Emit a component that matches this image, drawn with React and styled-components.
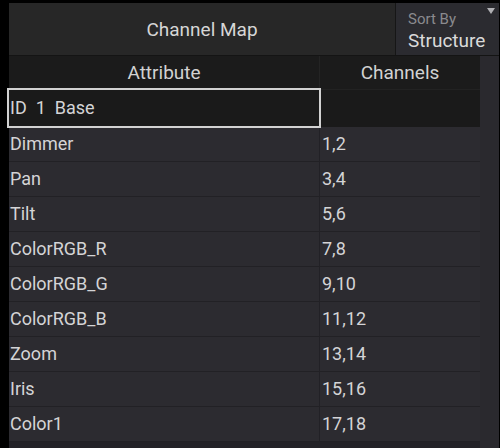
import styled, { createGlobalStyle } from "styled-components";

const rows = [
  { name: "Dimmer", ch: "1,2" },
  { name: "Pan", ch: "3,4" },
  { name: "Tilt", ch: "5,6" },
  { name: "ColorRGB_R", ch: "7,8" },
  { name: "ColorRGB_G", ch: "9,10" },
  { name: "ColorRGB_B", ch: "11,12" },
  { name: "Zoom", ch: "13,14" },
  { name: "Iris", ch: "15,16" },
  { name: "Color1", ch: "17,18" },
];

const Global = createGlobalStyle`
  html, body {
    margin: 0;
    background: #000;
    font-family: Roboto, "Liberation Sans", sans-serif;
  }
`;

const Screen = styled.div`
  width: 500px;
  height: 448px;
  box-sizing: border-box;
  padding: 3px 1px 0 9px;
  background: #000;
  display: flex;
  flex-direction: column;
  overflow: hidden;
`;

const TopBar = styled.div`
  display: flex;
  height: 52px;
  border-bottom: 1px solid #141414;
`;

const Title = styled.div`
  flex: 1;
  background: #272727;
  color: #d6d6d6;
  font-size: 19px;
  display: flex;
  align-items: center;
  justify-content: center;
`;

const SortBox = styled.div`
  position: relative;
  width: 104px;
  border-left: 1px solid #161616;
  background: #2b2b30;
  padding: 7px 0 0 12px;
  box-sizing: border-box;
  display: flex;
  flex-direction: column;
`;

const SortLabel = styled.span`
  font-size: 15px;
  color: #8a8a8e;
  line-height: 18px;
`;

const SortValue = styled.span`
  font-size: 19px;
  color: #dadada;
  line-height: 26px;
`;

const Caret = styled.div`
  position: absolute;
  top: 5px;
  right: 4px;
  width: 0;
  height: 0;
  border-left: 4px solid transparent;
  border-right: 4px solid transparent;
  border-top: 6px solid #b0b0b4;
`;

const Body = styled.div`
  flex: 1;
  display: flex;
`;

const Table = styled.div`
  flex: 1;
  display: flex;
  flex-direction: column;
  background: #232227;
`;

const ScrollTrack = styled.div`
  width: 19px;
  background: #2a292e;
`;

const Row = styled.div`
  display: grid;
  grid-template-columns: 310px 1fr;
  height: ${({ $h }) => $h}px;
  box-sizing: border-box;
  background: ${({ $bg }) => $bg};
  border-bottom: 1px solid ${({ $line }) => $line};
`;

const HeadCell = styled.div`
  display: flex;
  align-items: center;
  justify-content: center;
  color: #d2d2d2;
  font-size: 19px;
  & + & {
    border-left: 1px solid #242424;
  }
`;

const Cell = styled.div`
  position: relative;
  display: flex;
  align-items: center;
  padding: 0 0 2px ${({ $pad }) => $pad}px;
  color: #d4d4d6;
  font-size: 18px;
  white-space: pre;
  ${({ $selected }) =>
    $selected &&
    `
    outline: 2px solid #d2d2d2;
    z-index: 1;
  `}
  & + & {
    border-left: 1px solid #222126;
  }
`;

export default function App() {
  return (
    <Screen>
      <Global />
      <TopBar>
        <Title>Channel Map</Title>
        <SortBox>
          <SortLabel>Sort By</SortLabel>
          <SortValue>Structure</SortValue>
          <Caret />
        </SortBox>
      </TopBar>
      <Body>
        <Table>
          <Row $h={34} $bg="#1b1b1b" $line="#222222">
            <HeadCell>Attribute</HeadCell>
            <HeadCell>Channels</HeadCell>
          </Row>
          <Row $h={37} $bg="#1a1a1a" $line="#1a1a1a">
            <Cell $pad={1} $selected>ID  1  Base</Cell>
            <Cell $pad={2} />
          </Row>
          {rows.map((r) => (
            <Row key={r.name} $h={35} $bg="#2c2b30" $line="#222125">
              <Cell $pad={1}>{r.name}</Cell>
              <Cell $pad={2}>{r.ch}</Cell>
            </Row>
          ))}
        </Table>
        <ScrollTrack />
      </Body>
    </Screen>
  );
}
